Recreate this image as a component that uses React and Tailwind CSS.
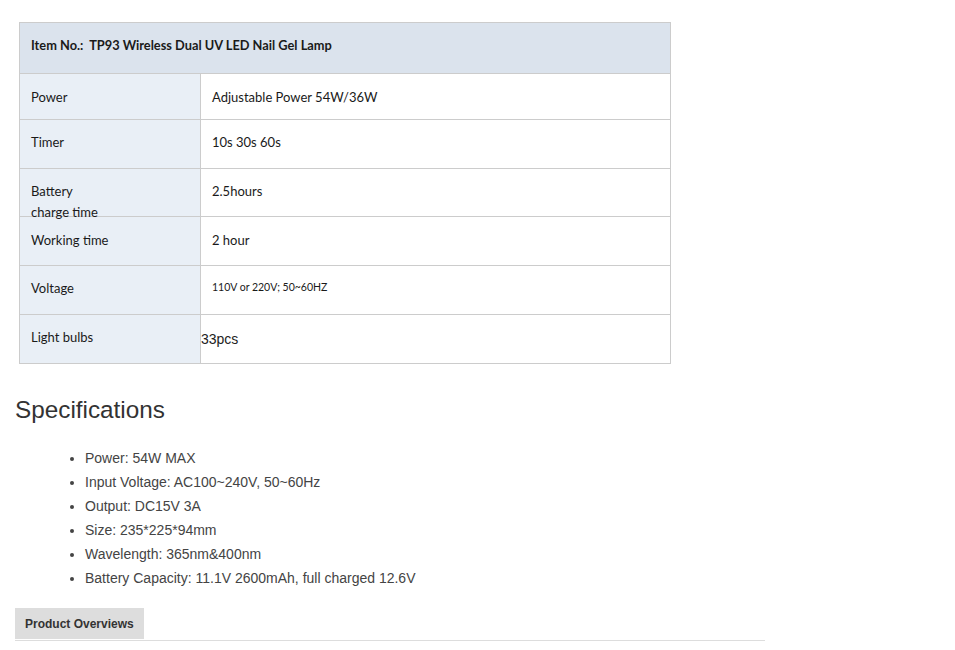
export default function App() {
  const cal = { fontFamily: "Lato, 'Open Sans', sans-serif" };
  const rows = [
    { label: "Power", value: "Adjustable Power 54W/36W", h: "h-[46px]", off: "top-[1px]" },
    { label: "Timer", value: "10s 30s 60s", h: "h-[49px]", off: "top-[-1px]" },
    { label: "battery", value: "2.5hours", h: "h-[48px]", off: "top-[-1px]" },
    { label: "Working time", value: "2 hour", h: "h-[49px]", off: "top-[0px]" },
    { label: "Voltage", value: "volt", h: "h-[49px]", off: "top-[-1px]" },
    { label: "Light bulbs", value: "bulbs", h: "h-[49px]", off: "top-[-1px]" },
  ];
  return (
    <div className="bg-white w-[955px] h-[650px] overflow-hidden text-[#333]" style={{ fontFamily: "'Liberation Sans', Arial, sans-serif" }}>
      <div className="pt-[22px] pl-[19px]">
        <table className="border-collapse w-[652px] text-[13px] text-[#1a1a1a]" style={cal}>
          <tbody>
            <tr className="h-[51px] bg-[#dbe3ed]">
              <td colSpan={2} className="border border-[#ccc] pl-[11px] pb-[5px] font-bold align-middle text-[12.8px]">
                Item No.:&nbsp; TP93 Wireless Dual UV LED Nail Gel Lamp
              </td>
            </tr>
            {rows.map((r) => (
              <tr key={r.label} className={r.h}>
                <td className="w-[181px] border border-[#ccc] bg-[#e9eff6] pl-[11px] align-middle">
                  {r.label === "battery" ? (
                    <div className="h-[21px] leading-[21px] relative top-[-1px]">
                      <div>Battery</div>
                      <div>charge time</div>
                    </div>
                  ) : (
                    <div className={"relative " + r.off}>{r.label}</div>
                  )}
                </td>
                <td className="border border-[#ccc] align-middle">
                  {r.value === "volt" ? (
                    <div className="pl-[11px] text-[10.5px] relative top-[-2px]">110V or 220V; 50~60HZ</div>
                  ) : r.value === "bulbs" ? (
                    <div className="text-[14px] text-[#222]" style={{ fontFamily: "'Liberation Sans', Arial, sans-serif" }}>33pcs</div>
                  ) : (
                    <div className={"pl-[11px] relative " + r.off}>{r.value}</div>
                  )}
                </td>
              </tr>
            ))}
          </tbody>
        </table>
      </div>
      <div className="pl-[15px]">
        <h2 className="text-[24.3px] leading-[30px] mt-[31px] text-[#333]">Specifications</h2>
        <ul className="list-disc pl-[70px] mt-[21px] text-[14px] leading-[24px] text-[#444]">
          <li>Power: 54W MAX</li>
          <li>Input Voltage: AC100~240V, 50~60Hz</li>
          <li>Output: DC15V 3A</li>
          <li>Size: 235*225*94mm</li>
          <li>Wavelength: 365nm&amp;400nm</li>
          <li>Battery Capacity: 11.1V 2600mAh, full charged 12.6V</li>
        </ul>
        <div className="mt-[18px] w-[750px] border-b border-[#ddd]">
          <div className="inline-flex items-center h-[31px] px-[10px] bg-[#dddddd] text-[12px] font-bold text-[#333] mb-[1px]">
            Product Overviews
          </div>
        </div>
      </div>
    </div>
  );
}
